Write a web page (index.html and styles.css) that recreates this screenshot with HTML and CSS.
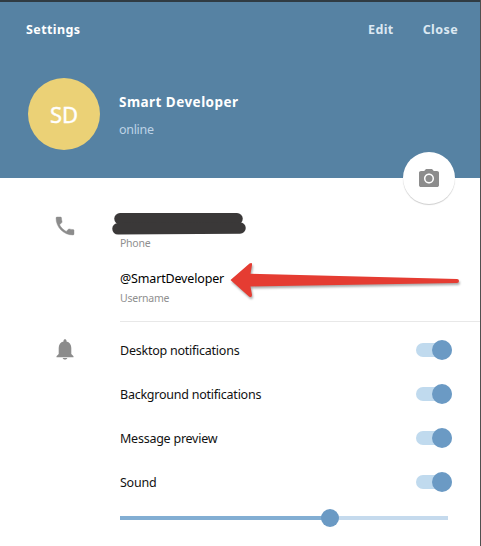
FILE: index.html
```html
<!DOCTYPE html>
<html lang="en">
<head>
<meta charset="utf-8">
<title>Settings</title>
<link rel="stylesheet" href="styles.css">
</head>
<body>
<main class="panel">
  <header class="head">
    <nav class="bar">
      <b class="title">Settings</b>
      <b class="action edit">Edit</b>
      <b class="action close">Close</b>
    </nav>
    <div class="profile">
      <div class="avatar">SD</div>
      <div class="who">
        <b class="name">Smart Developer</b>
        <span class="status">online</span>
      </div>
    </div>
    <div class="camera">
      <svg width="24" height="24" viewBox="0 0 24 24" fill="#8c8c8c"><circle cx="12" cy="12.500" r="3.500"/><path d="M9 3 7.200 5H4c-1.100 0-2 .7-2 1.800v12.400c0 1.100.9 1.800 2 1.800h16c1.100 0 2-.7 2-1.800V6.800c0-1.100-.9-1.800-2-1.800h-3.200L15 3H9zm3 14.500c-2.760 0-5-2.240-5-5s2.240-5 5-5 5 2.240 5 5-2.240 5-5 5z"/></svg>
    </div>
  </header>
  <section class="group contact">
    <svg class="icon phone-icon" width="24" height="24" viewBox="0 0 24 24" fill="#8c8c8c" stroke="#8c8c8c" stroke-width=".4"><path d="M6.620 10.790c1.440 2.830 3.760 5.140 6.590 6.590l2.200-2.200c.27-.27.67-.36 1.020-.24 1.120.37 2.330.57 3.570.57.55 0 1 .45 1 1V20c0 .55-.45 1-1 1-9.390 0-17-7.610-17-17 0-.55.45-1 1-1h3.500c.55 0 1 .45 1 1 0 1.250.2 2.450.57 3.570.11.35.03.74-.25 1.020l-2.200 2.200z"/></svg>
    <div class="fields">
      <svg class="redaction" width="136" height="24" viewBox="0 0 136 24"><g stroke="#3a3838" stroke-width="11.500" stroke-linecap="round"><path d="M9 6.700H126"/><path d="M7 16.800 129 16"/></g></svg>
      <div class="caption">Phone</div>
      <div class="value">@SmartDeveloper</div>
      <div class="caption username">Username</div>
    </div>
  </section>
  <section class="group notify">
    <svg class="icon bell-icon" width="24" height="24" viewBox="0 0 24 24" fill="#8c8c8c"><path d="M12 22.500c1.300 0 2.300-.6 2.300-1.500H9.700c0 .9 1 1.500 2.300 1.500zM18.300 17v-6c0-3.300-1.700-5.900-4.800-6.600v-.7c0-.8-.7-1.500-1.500-1.500s-1.500.7-1.500 1.500v.7C7.400 5.100 5.700 7.700 5.700 11v6l-2.200 2.200v1h17v-1z"/></svg>
    <div class="options">
      <div class="row"><span class="label">Desktop notifications</span><i class="switch"></i></div>
      <div class="row"><span class="label">Background notifications</span><i class="switch"></i></div>
      <div class="row"><span class="label">Message preview</span><i class="switch"></i></div>
      <div class="row"><span class="label">Sound</span><i class="switch"></i></div>
      <div class="slider"></div>
    </div>
  </section>
  <svg class="arrow" width="240" height="46" viewBox="0 0 240 46"><path d="M.5 22 19.500 5.500Q22.500 4 22 7L20.500 15.800 227 21q2 .2 2 2t-2 2L20.500 28.500 22 37q0 3-3 1.500z"/></svg>
</main>
</body>
</html>
```
FILE: styles.css
```css
* { box-sizing: border-box; }
body {
  margin: 0;
  background: #505050;
  font: 12.5px/16px "Noto Sans", sans-serif;
  color: #111;
}
.panel {
  position: relative;
  width: 480px;
  height: 546px;
  background: #fff;
  border-top: 2px solid #303b42;
  overflow: hidden;
}
.head { position: relative; height: 176px; background: #5682a3; color: #fff; }
.bar { display: flex; height: 56px; padding: 20px 22px 0 26px; letter-spacing: 0.4px; }
.title { flex: 1; }
.action { color: #dce8f2; }
.edit { margin-right: 29px; }
.profile { display: flex; padding: 20px 0 0 28px; }
.avatar {
  width: 72px;
  height: 72px;
  border-radius: 50%;
  background: #ebd176;
  font-size: 22px;
  line-height: 73px;
  text-align: center;
  -webkit-text-stroke: 0.4px #fff;
}
.who { display: flex; flex-direction: column; gap: 12px; padding: 16px 0 0 19px; }
.name { font-size: 13.5px; letter-spacing: 0.46px; }
.status { color: #bdd3e6; letter-spacing: -0.3px; }
.camera {
  position: absolute;
  left: 403px;
  top: 150px;
  width: 52px;
  height: 52px;
  padding: 14px;
  border-radius: 50%;
  background: #fff;
  box-shadow: 0 1px 1px #0003;
}
.camera svg { display: block; }
.group { display: flex; }
.icon { flex: none; margin-left: 53px; }
.contact { height: 144px; }
.phone-icon { margin-top: 36px; }
.fields { width: 360px; margin-left: 43px; padding-top: 34px; border-bottom: 1px solid #e8e8e8; }
.redaction { display: block; margin-left: -9px; }
.caption { font-size: 10.5px; line-height: 14px; color: #8f8f8f; letter-spacing: -0.24px; }
.value { margin-top: 21px; color: #000; letter-spacing: -0.16px; }
.username { margin-top: 4px; }
.notify { height: 224px; }
.bell-icon { margin-top: 15px; }
.options { width: 328px; margin-left: 43px; padding-top: 6px; }
.row { display: flex; align-items: center; justify-content: space-between; height: 44px; }
.label { padding-top: 2px; letter-spacing: -0.24px; }
.switch { position: relative; width: 36px; height: 14px; margin-right: -4px; border-radius: 7px; background: #c0daee; }
.switch::after {
  content: "";
  position: absolute;
  right: 0;
  top: -3px;
  width: 20px;
  height: 20px;
  border-radius: 50%;
  background: #6b9ac4;
}
.slider {
  position: relative;
  width: 328px;
  height: 4px;
  margin-top: 12px;
  background: linear-gradient(90deg, #82aed3 210px, #c5daed 210px);
}
.slider::after {
  content: "";
  position: absolute;
  left: 201px;
  top: -7px;
  width: 18px;
  height: 18px;
  border-radius: 50%;
  background: #6b9ac4;
}
.arrow { position: absolute; left: 230px; top: 256px; fill: #e53c32; filter: drop-shadow(1px 2px 1px #0005); }
```
